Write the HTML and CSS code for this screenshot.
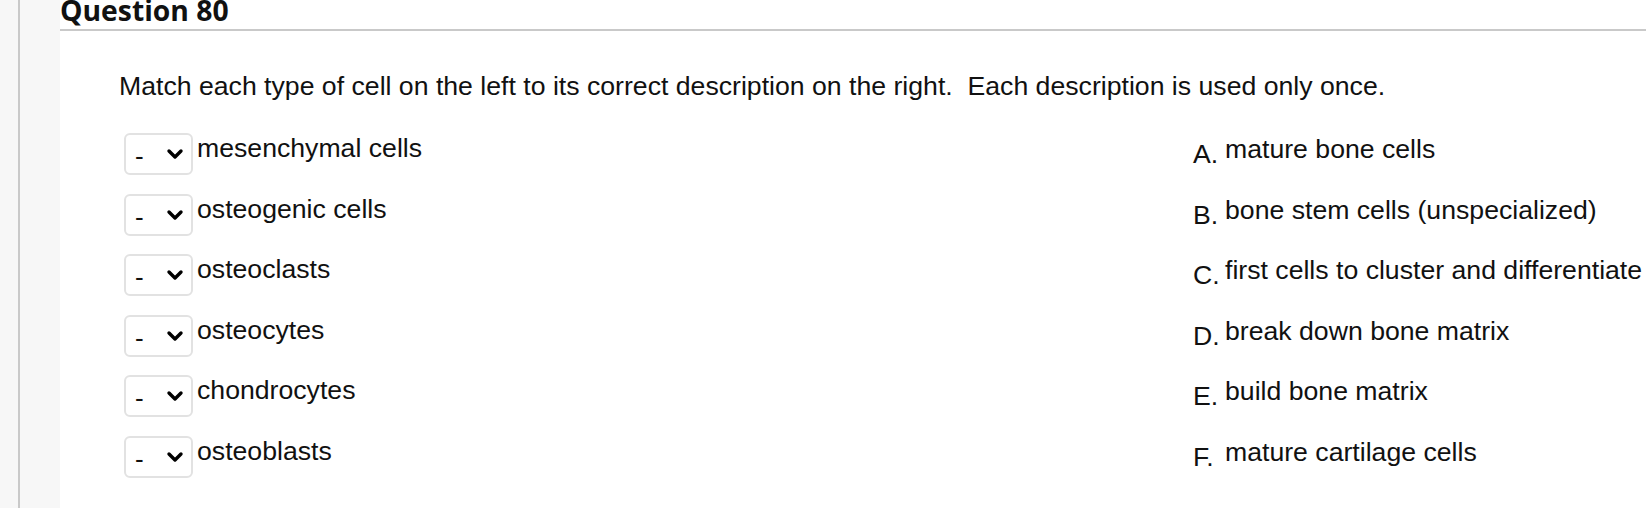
FILE: index.html
```html
<!DOCTYPE html>
<html lang="en">
<head>
<meta charset="utf-8">
<title>Question 80</title>
<link rel="stylesheet" href="styles.css">
</head>
<body>
<div class="page">
  <aside class="sidebar"><div class="rail"></div></aside>
  <main class="question">
    <h2 class="question-title">Question 80</h2>
    <div class="question-body">
      <p class="prompt">Match each type of cell on the left to its correct description on the right.&nbsp; Each description is used only once.</p>
      <div class="matches">
        <div class="match-left"><div class="select"><span class="dash">-</span><svg class="chev" width="18" height="12" viewBox="0 0 18 12"><path d="M3 3 L9 9 L15 3" fill="none" stroke="#000" stroke-width="3.4" stroke-linecap="round" stroke-linejoin="round"/></svg></div><span class="term">mesenchymal cells</span></div>
        <div class="match-right"><span class="letter">A.</span>mature bone cells</div>

        <div class="match-left"><div class="select"><span class="dash">-</span><svg class="chev" width="18" height="12" viewBox="0 0 18 12"><path d="M3 3 L9 9 L15 3" fill="none" stroke="#000" stroke-width="3.4" stroke-linecap="round" stroke-linejoin="round"/></svg></div><span class="term">osteogenic cells</span></div>
        <div class="match-right"><span class="letter">B.</span>bone stem cells (unspecialized)</div>

        <div class="match-left"><div class="select"><span class="dash">-</span><svg class="chev" width="18" height="12" viewBox="0 0 18 12"><path d="M3 3 L9 9 L15 3" fill="none" stroke="#000" stroke-width="3.4" stroke-linecap="round" stroke-linejoin="round"/></svg></div><span class="term">osteoclasts</span></div>
        <div class="match-right"><span class="letter">C.</span>first cells to cluster and differentiate</div>

        <div class="match-left"><div class="select"><span class="dash">-</span><svg class="chev" width="18" height="12" viewBox="0 0 18 12"><path d="M3 3 L9 9 L15 3" fill="none" stroke="#000" stroke-width="3.4" stroke-linecap="round" stroke-linejoin="round"/></svg></div><span class="term">osteocytes</span></div>
        <div class="match-right"><span class="letter">D.</span>break down bone matrix</div>

        <div class="match-left"><div class="select"><span class="dash">-</span><svg class="chev" width="18" height="12" viewBox="0 0 18 12"><path d="M3 3 L9 9 L15 3" fill="none" stroke="#000" stroke-width="3.4" stroke-linecap="round" stroke-linejoin="round"/></svg></div><span class="term">chondrocytes</span></div>
        <div class="match-right"><span class="letter">E.</span>build bone matrix</div>

        <div class="match-left"><div class="select"><span class="dash">-</span><svg class="chev" width="18" height="12" viewBox="0 0 18 12"><path d="M3 3 L9 9 L15 3" fill="none" stroke="#000" stroke-width="3.4" stroke-linecap="round" stroke-linejoin="round"/></svg></div><span class="term">osteoblasts</span></div>
        <div class="match-right"><span class="letter">F.</span>mature cartilage cells</div>
      </div>
    </div>
  </main>
</div>
</body>
</html>
```
FILE: styles.css
```css
html, body {
  margin: 0;
  padding: 0;
  background: #ffffff;
}

.page {
  display: flex;
  min-height: 508px;
  overflow: hidden;
}

.sidebar {
  width: 60px;
  flex: 0 0 60px;
  background: #f7f7f7;
  display: flex;
}

.rail {
  width: 2px;
  margin-left: 18px;
  background: #c9c9c9;
}

.question {
  flex: 1;
  min-width: 0;
}

.question-title {
  margin: -4px 0 0 0;
  padding: 0 0 5px 0;
  font-family: "Open Sans", "Liberation Sans", sans-serif;
  font-weight: 700;
  font-size: 28.3px;
  line-height: 28px;
  color: #111;
  border-bottom: 2px solid #c9c9c9;
}

.question-body {
  padding-left: 59px;
  font-family: "Liberation Sans", Arial, sans-serif;
  font-size: 26.65px;
  line-height: 30px;
  color: #111;
}

.prompt {
  margin: 40px 0 0 0;
  white-space: nowrap;
}

.matches {
  margin: 32px 0 0 5px;
  display: grid;
  grid-template-columns: 1069px 1fr;
  grid-auto-rows: 60.5px;
}

.match-left {
  display: flex;
  align-items: flex-start;
  gap: 4px;
}

.select {
  box-sizing: border-box;
  width: 69px;
  height: 42px;
  border: 2px solid #e2e2e2;
  border-radius: 6px;
  background: #fff;
  display: flex;
  align-items: center;
  justify-content: space-between;
  padding: 0 7px 0 9px;
}

.dash {
  font-size: 26px;
  line-height: 26px;
  margin-top: 4px;
}

.chev {
  display: block;
}

.term {
  white-space: nowrap;
}

.match-right {
  padding-top: 1px;
  white-space: nowrap;
}

.letter {
  display: inline-block;
  width: 32px;
  vertical-align: -5px;
}
```
